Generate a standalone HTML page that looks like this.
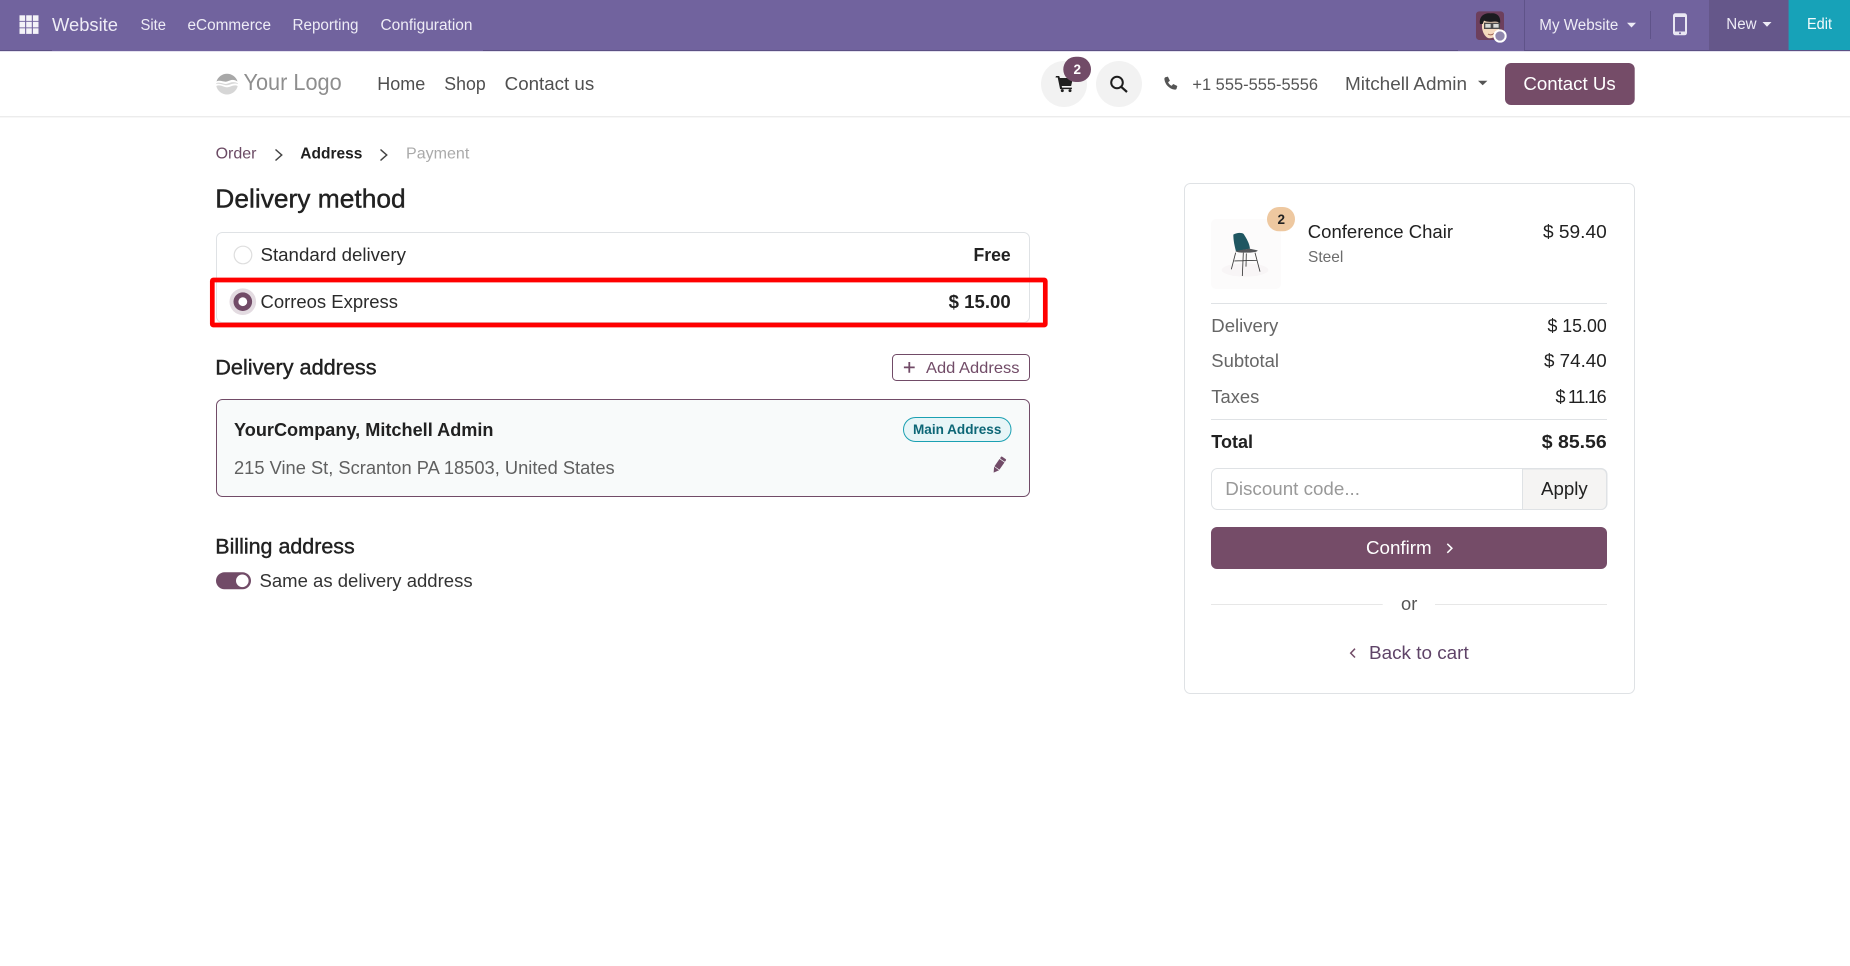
<!DOCTYPE html>
<html lang="en">
<head>
<meta charset="utf-8">
<title>Delivery method</title>
<style>
html,body{margin:0;padding:0;background:#fff;width:1850px;height:966px;overflow:hidden}
svg{display:block;position:absolute;left:0;top:0}
text{font-family:"Liberation Sans",sans-serif;white-space:pre}
.b{font-weight:700}
.m{stroke-width:.4px;paint-order:stroke}
</style>
</head>
<body>
<svg width="1850" height="966" viewBox="0 0 1850 966" xmlns="http://www.w3.org/2000/svg">
<rect width="1850" height="966" fill="#fff"/>

<!-- top bar -->
<rect width="1850" height="51" fill="#71639e"/>
<rect x="0" y="50" width="52" height="1" fill="#5c5084"/>
<rect x="483" y="50" width="975" height="1" fill="#5c5084"/>
<rect x="1524" y="50" width="326" height="1" fill="#5c5084"/>
<rect x="0" y="51" width="1850" height="1" fill="#e4e1ef"/>
<g fill="#f4f3f8">
<rect x="19.5" y="15.3" width="5.6" height="5.6"/><rect x="26.2" y="15.3" width="5.6" height="5.6"/><rect x="32.9" y="15.3" width="5.6" height="5.6"/>
<rect x="19.5" y="21.8" width="5.6" height="5.6"/><rect x="26.2" y="21.8" width="5.6" height="5.6"/><rect x="32.9" y="21.8" width="5.6" height="5.6"/>
<rect x="19.5" y="28.3" width="5.6" height="5.6"/><rect x="26.2" y="28.3" width="5.6" height="5.6"/><rect x="32.9" y="28.3" width="5.6" height="5.6"/>
</g>
<g fill="#eeecf6">
<text x="52" y="31" font-size="18.500" textLength="66" lengthAdjust="spacingAndGlyphs">Website</text>
<text x="140.5" y="30" font-size="15.3" textLength="25.5" lengthAdjust="spacingAndGlyphs">Site</text>
<text x="187.5" y="30" font-size="15.3" textLength="83.5" lengthAdjust="spacingAndGlyphs">eCommerce</text>
<text x="292.5" y="30" font-size="15.3" textLength="66" lengthAdjust="spacingAndGlyphs">Reporting</text>
<text x="380.5" y="30" font-size="15.3" textLength="92" lengthAdjust="spacingAndGlyphs">Configuration</text>
<text x="1539.3" y="30" font-size="15.3" textLength="79" lengthAdjust="spacingAndGlyphs">My Website</text>
</g>
<path d="M1627 22.700h9l-4.500 4.800z" fill="#eeecf6"/>

<!-- avatar -->
<g transform="translate(1460 0) scale(.3333)">
<rect x="48" y="34" width="84" height="86" rx="10" fill="#6d3f5c"/>
<path d="M66 60 L118 60 L118 92 C112 108 96 118 84 114 C74 110 68 96 66 84z" fill="#f5d9bd"/>
<path d="M60 72 C56 50 72 38 92 40 C112 38 124 50 120 72 L114 66 C104 62 88 70 72 62 L68 72z" fill="#1b1b1f"/>
<rect x="74" y="70" width="20" height="15" fill="#d8dcd8" stroke="#4b4b4b" stroke-width="4"/>
<rect x="98" y="70" width="20" height="15" fill="#d8dcd8" stroke="#4b4b4b" stroke-width="4"/>
<path d="M84 102 q10 6 18 -2" stroke="#9a5f50" stroke-width="3" fill="none"/>
<circle cx="120" cy="108" r="20" fill="#fff"/>
<circle cx="120" cy="108" r="14" fill="#8f87ad"/>
</g>
<rect x="1524" y="0" width="1" height="50" fill="#5f5389"/>
<rect x="1650" y="11" width="1" height="28" fill="#5f5389"/>

<!-- mobile icon -->
<rect x="1673" y="13.300" width="14" height="22" rx="2.500" fill="#e9e7f3"/>
<rect x="1675" y="17" width="10" height="14.500" fill="#71639e"/>
<circle cx="1680" cy="33.300" r="1" fill="#71639e"/>

<!-- new / edit -->
<rect x="1709" y="0" width="79.600" height="50" fill="#65578a"/>
<rect x="1788.600" y="0" width="61.400" height="50" fill="#17a2b8"/>
<text x="1726.300" y="29" font-size="15.300" fill="#eeecf6" textLength="30.300" lengthAdjust="spacingAndGlyphs">New</text>
<path d="M1762.500 22h9l-4.500 4.800z" fill="#eeecf6"/>
<text x="1807" y="29" font-size="15.300" fill="#f4fbfc" textLength="25" lengthAdjust="spacingAndGlyphs">Edit</text>

<!-- website nav -->
<rect x="0" y="116" width="1850" height="1" fill="#ececec"/>
<rect x="0" y="117" width="1850" height="1" fill="#f7f7f7"/>
<path d="M216.500 81.500 A11 11 0 0 1 237.500 81.500 C233 78.500 230 80.500 227 81.500 C224 82.500 220 79.500 216.500 81.500z" fill="#a8a8a8"/>
<path d="M216.200 83.300 C220 81.300 224 84.800 227 83.800 C230 82.800 233 80.800 237.800 83.300 L237.800 84 C233.500 82.500 230.500 85 227 85.300 C223.500 85.500 220.500 83 216.200 84z" fill="#d8d8d8"/>
<path d="M216.300 86 C220 84 224 87.300 227 87.300 C230 87.300 234 84 237.700 86 A11 11 0 0 1 216.300 86z" fill="#d6d6d6"/>
<text x="243.500" y="90" font-size="23" fill="#8e8e8e" textLength="98.200" lengthAdjust="spacingAndGlyphs">Your Logo</text>
<g fill="#4f4f4f">
<text x="377.300" y="90" font-size="18" textLength="48" lengthAdjust="spacingAndGlyphs">Home</text>
<text x="444.300" y="90" font-size="18" textLength="41.400" lengthAdjust="spacingAndGlyphs">Shop</text>
<text x="504.700" y="90" font-size="18" textLength="89.500" lengthAdjust="spacingAndGlyphs">Contact us</text>
</g>

<!-- cart + search -->
<circle cx="1064" cy="84" r="23" fill="#f2f2f2"/>
<circle cx="1119" cy="84" r="23" fill="#f2f2f2"/>
<path d="M1056 76h3.200l.7 2h13.100l-1.900 8h-9.400l.4 1.600h9.800v1.500h-11.800l-2.400-11.600h-2.200z" fill="#1f1f1f"/>
<circle cx="1062.300" cy="90.600" r="1.500" fill="#1f1f1f"/>
<circle cx="1070" cy="90.600" r="1.500" fill="#1f1f1f"/>
<rect x="1063.300" y="56.700" width="27.700" height="25.300" rx="12.600" fill="#714b67"/>
<text x="1077.200" y="74" font-size="13.500" class="b" fill="#fff" text-anchor="middle">2</text>
<circle cx="1117" cy="82.500" r="5.800" fill="none" stroke="#1d1d1d" stroke-width="2"/>
<path d="M1121.200 86.800l5.800 5.200" stroke="#1d1d1d" stroke-width="2.200" fill="none"/>
<path d="M1165.300 77.200l2.600-.6 2 4.100-1.800 1.500c.7 1.600 2 2.900 3.600 3.600l1.500-1.800 4.100 2-.7 2.600c-.3.800-1 1.100-1.900 1-5.500-.8-9.600-5-10.300-10.400-.1-.8.200-1.500.9-2z" fill="#555"/>
<text x="1192.400" y="90" font-size="16.500" fill="#555" textLength="125.600" lengthAdjust="spacingAndGlyphs">+1 555-555-5556</text>
<text x="1345" y="90" font-size="18" fill="#555" textLength="122" lengthAdjust="spacingAndGlyphs">Mitchell Admin</text>
<path d="M1478 80.700h9.400l-4.700 4.600z" fill="#555"/>
<rect x="1505" y="63" width="129.700" height="42" rx="6" fill="#754c68"/>
<text x="1523.400" y="90" font-size="18" fill="#fff" textLength="92.300" lengthAdjust="spacingAndGlyphs">Contact Us</text>

<!-- breadcrumb -->
<text x="215.600" y="158.700" font-size="16" fill="#6b4a64" textLength="40.900" lengthAdjust="spacingAndGlyphs">Order</text>
<path d="M275.500 149.500l6.200 5.500-6.200 5.500" fill="none" stroke="#444" stroke-width="1.500"/>
<text x="300.300" y="158.700" font-size="16" class="b" fill="#1f1f1f" textLength="62.100" lengthAdjust="spacingAndGlyphs">Address</text>
<path d="M380.500 149.500l6.200 5.500-6.200 5.500" fill="none" stroke="#444" stroke-width="1.500"/>
<text x="406" y="158.700" font-size="16" fill="#aaa" textLength="63.300" lengthAdjust="spacingAndGlyphs">Payment</text>

<!-- delivery method -->
<text x="215.300" y="207.500" font-size="26" fill="#212121" stroke="#212121" class="m" textLength="190.400" lengthAdjust="spacingAndGlyphs">Delivery method</text>
<rect x="216.500" y="232.500" width="813" height="90" rx="6" fill="#fff" stroke="#dfe2e5"/>
<circle cx="243" cy="255" r="8.800" fill="#fff" stroke="#dedede" stroke-width="1.200"/>
<text x="260.500" y="261" font-size="18" fill="#2b2b2b" textLength="145.500" lengthAdjust="spacingAndGlyphs">Standard delivery</text>
<text x="973.500" y="261" font-size="18" class="b" fill="#212121" textLength="37.200" lengthAdjust="spacingAndGlyphs">Free</text>
<circle cx="242.800" cy="301.700" r="13.300" fill="#e3dbe1"/>
<circle cx="242.800" cy="301.700" r="9.300" fill="#714b67"/>
<circle cx="242.800" cy="301.700" r="4.400" fill="#fff"/>
<text x="260.500" y="307.800" font-size="18" fill="#2b2b2b" textLength="137.500" lengthAdjust="spacingAndGlyphs">Correos Express</text>
<text x="948.700" y="307.800" font-size="18" class="b" fill="#212121" textLength="62" lengthAdjust="spacingAndGlyphs">$ 15.00</text>
<rect x="212.300" y="280" width="833" height="45" rx="1" fill="none" stroke="#ff0000" stroke-width="4.700"/>

<!-- delivery address -->
<text x="215.300" y="374.300" font-size="21.500" fill="#212121" stroke="#212121" class="m" textLength="161.300" lengthAdjust="spacingAndGlyphs">Delivery address</text>
<rect x="892.500" y="354.500" width="137" height="26" rx="4" fill="#fff" stroke="#714b67"/>
<path d="M909.300 362v10.800M903.900 367.400h10.800" stroke="#714b67" stroke-width="1.800" fill="none"/>
<text x="926" y="373" font-size="16" fill="#714b67" textLength="93.500" lengthAdjust="spacingAndGlyphs">Add Address</text>
<rect x="216.500" y="399.500" width="813" height="97" rx="6" fill="#f8fafa" stroke="#714b67"/>
<text x="234" y="436" font-size="18" class="b" fill="#212121" textLength="259.500" lengthAdjust="spacingAndGlyphs">YourCompany, Mitchell Admin</text>
<rect x="903.500" y="417.500" width="107.500" height="24" rx="12" fill="#e7f5f7" stroke="#1ba0b2"/>
<text x="913" y="434" font-size="13.500" class="b" fill="#0c6676" textLength="88.400" lengthAdjust="spacingAndGlyphs">Main Address</text>
<text x="234" y="474" font-size="18" fill="#606060" textLength="380.700" lengthAdjust="spacingAndGlyphs">215 Vine St, Scranton PA 18503, United States</text>
<g transform="translate(998.800 465.300) rotate(35) scale(.92)" fill="#714b67">
<rect x="-3.300" y="-9.800" width="6.600" height="3" rx="1"/>
<rect x="-3.300" y="-6" width="6.600" height="9.500"/>
<path d="M-3.300 4.200h6.600l-3.300 5.600z"/>
</g>

<!-- billing -->
<text x="215.300" y="553.300" font-size="21.500" fill="#212121" stroke="#212121" class="m" textLength="139.400" lengthAdjust="spacingAndGlyphs">Billing address</text>
<rect x="216" y="572.300" width="35" height="17" rx="8.500" fill="#714b67"/>
<circle cx="242.300" cy="580.800" r="6.300" fill="#fff"/>
<text x="259.500" y="587.200" font-size="18" fill="#333" textLength="213.100" lengthAdjust="spacingAndGlyphs">Same as delivery address</text>

<!-- summary card -->
<rect x="1184.500" y="183.500" width="450" height="510" rx="6" fill="#fff" stroke="#dfe2e5"/>
<rect x="1211" y="219" width="70" height="70" rx="5" fill="#fcfbfb"/>
<g transform="translate(1200 200) scale(.3333)">
<ellipse cx="135" cy="210" rx="70" ry="20" fill="#f8f5f6"/>
<path d="M107 158 L94 208 M165 158 L180 215 M130 158 L127 228 M139 160 L138 200 M103 183 L170 181" stroke="#3c3c3c" stroke-width="2.600" fill="none"/>
<path d="M100 104 C110 97 126 97 131 102 C140 116 148 130 150 146 L108 154 C104 140 100 122 100 104z" fill="#1f5661"/>
<path d="M106 153 L148 146 L173 151 C172 156 158 158 135 158 C120 158 110 157 106 153z" fill="#55575a"/>
</g>
<rect x="1267" y="207" width="28" height="24.300" rx="12.100" fill="#eec8a0"/>
<text x="1281.300" y="224" font-size="13.500" class="b" fill="#222" text-anchor="middle">2</text>
<text x="1307.800" y="237.800" font-size="18" fill="#212121" textLength="145.200" lengthAdjust="spacingAndGlyphs">Conference Chair</text>
<text x="1543" y="237.800" font-size="18" fill="#212121" textLength="63.700" lengthAdjust="spacingAndGlyphs">$ 59.40</text>
<text x="1308" y="262" font-size="15.600" fill="#6c6c6c" textLength="35.300" lengthAdjust="spacingAndGlyphs">Steel</text>
<rect x="1211" y="303" width="396" height="1" fill="#dfe2e5"/>
<text x="1211.300" y="332" font-size="18" fill="#666" textLength="67" lengthAdjust="spacingAndGlyphs">Delivery</text>
<text x="1547.500" y="332" font-size="18" fill="#212121" textLength="59.200" lengthAdjust="spacingAndGlyphs">$ 15.00</text>
<text x="1211.300" y="367" font-size="18" fill="#666" textLength="67.700" lengthAdjust="spacingAndGlyphs">Subtotal</text>
<text x="1544" y="367" font-size="18" fill="#212121" textLength="62.700" lengthAdjust="spacingAndGlyphs">$ 74.40</text>
<text x="1211.300" y="402.800" font-size="18" fill="#666" textLength="48" lengthAdjust="spacingAndGlyphs">Taxes</text>
<text x="1555.500" y="402.800" font-size="18" fill="#212121" textLength="51.200" lengthAdjust="spacing">$ 11.16</text>
<rect x="1211" y="419" width="396" height="1" fill="#dfe2e5"/>
<text x="1211.300" y="447.800" font-size="18" class="b" fill="#212121" textLength="41.700" lengthAdjust="spacingAndGlyphs">Total</text>
<text x="1541.800" y="447.800" font-size="18" class="b" fill="#212121" textLength="64.900" lengthAdjust="spacingAndGlyphs">$ 85.56</text>

<!-- discount -->
<rect x="1211.500" y="468.500" width="395.500" height="41" rx="6" fill="#fff" stroke="#dfe2e5"/>
<path d="M1522.500 469h78.500a5.500 5.500 0 0 1 5.500 5.500v29.500a5.500 5.500 0 0 1-5.500 5.500h-78.500z" fill="#f5f4f3" stroke="#dfe2e5"/>
<text x="1225.300" y="495" font-size="18" fill="#999" textLength="134.700" lengthAdjust="spacingAndGlyphs">Discount code...</text>
<text x="1541" y="495" font-size="18" fill="#212121" textLength="46.700" lengthAdjust="spacingAndGlyphs">Apply</text>

<!-- confirm -->
<rect x="1211" y="527" width="396" height="42" rx="6" fill="#754c68"/>
<text x="1366" y="554" font-size="18" fill="#fff" textLength="65.700" lengthAdjust="spacingAndGlyphs">Confirm</text>
<path d="M1447.300 543.800l4.600 4.500-4.600 4.500" fill="none" stroke="#fff" stroke-width="1.500"/>

<!-- or -->
<rect x="1211" y="604" width="171.700" height="1" fill="#e7e7e7"/>
<rect x="1435" y="604" width="172" height="1" fill="#e7e7e7"/>
<text x="1401" y="610" font-size="18" fill="#555" textLength="16.300" lengthAdjust="spacingAndGlyphs">or</text>

<!-- back -->
<path d="M1355 648.700l-4.300 4.400 4.300 4.400" fill="none" stroke="#714b67" stroke-width="1.500"/>
<text x="1369" y="659" font-size="18" fill="#5f4468" textLength="99.700" lengthAdjust="spacingAndGlyphs">Back to cart</text>
</svg>
</body>
</html>
